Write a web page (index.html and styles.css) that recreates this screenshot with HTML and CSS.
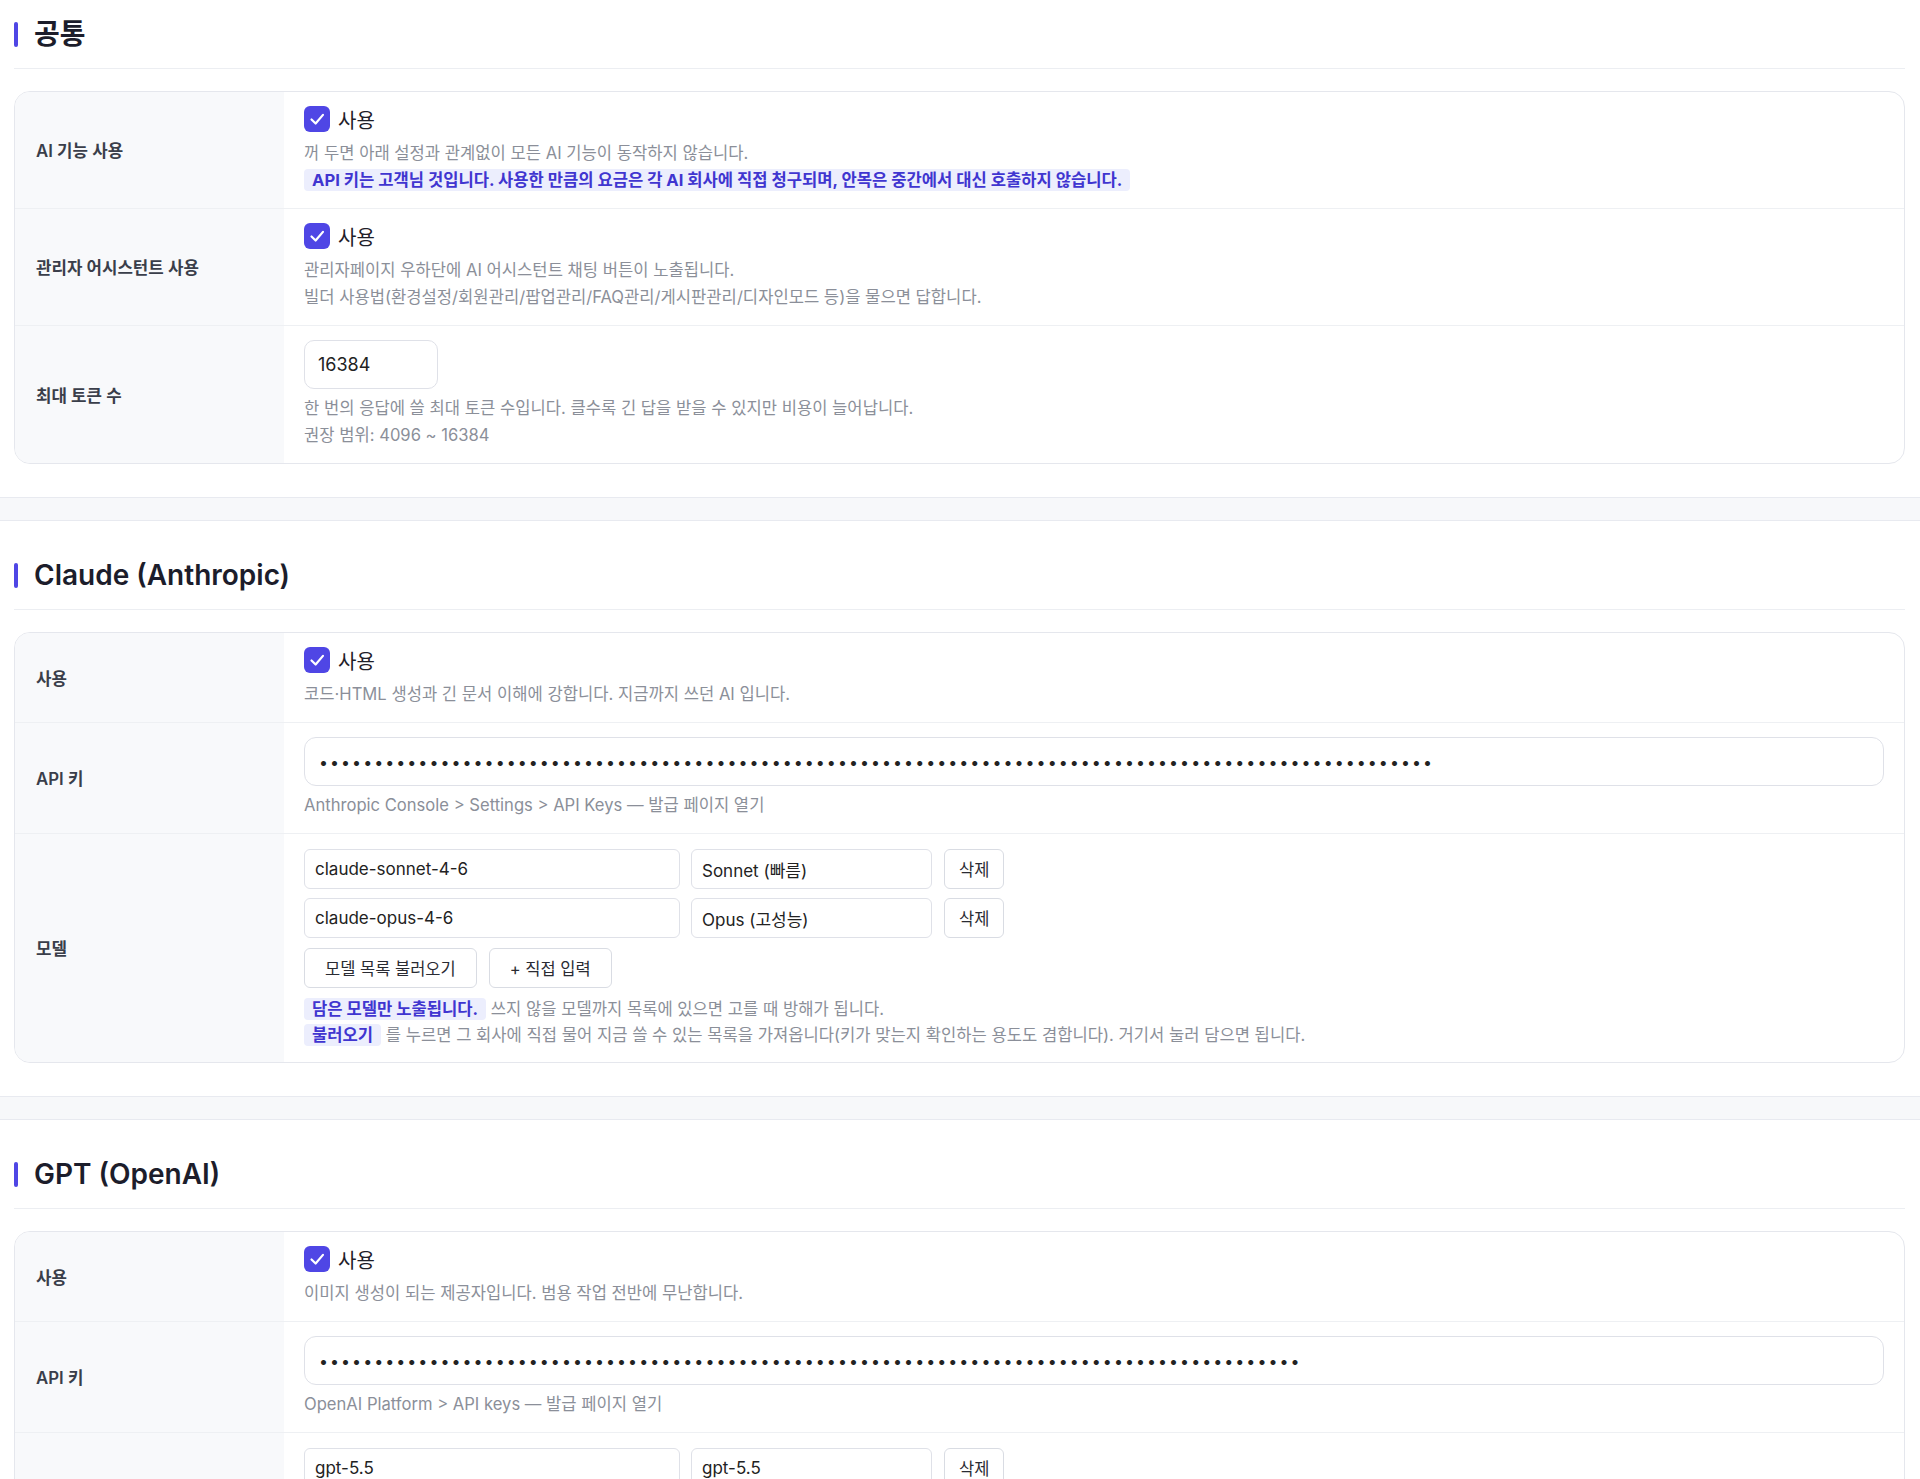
FILE: index.html
```html
<!DOCTYPE html>
<html lang="ko">
<head>
    <meta charset="UTF-8">
    <meta name="viewport" content="width=device-width, initial-scale=1.0">
    <title>AI 설정</title>
    <link rel="stylesheet" href="styles.css">
</head>
<body>
    <div class="settings">

        <!-- 공통 -->
        <section class="section">
            <h2 class="section-title">공통</h2>
            <div class="card">
                <div class="row">
                    <div class="row-label">AI 기능 사용</div>
                    <div class="row-body">
                        <label class="check">
                            <input type="checkbox" checked>
                            <span class="check-box"><svg viewBox="0 0 24 24"><polyline points="6,12.5 10.5,17 18.5,7.5"/></svg></span>
                            <span>사용</span>
                        </label>
                        <p class="desc">
                            꺼 두면 아래 설정과 관계없이 모든 AI 기능이 동작하지 않습니다.<br>
                            <span class="mark">API 키는 고객님 것입니다. 사용한 만큼의 요금은 각 AI 회사에 직접 청구되며, 안목은 중간에서 대신 호출하지 않습니다.</span>
                        </p>
                    </div>
                </div>
                <div class="row">
                    <div class="row-label">관리자 어시스턴트 사용</div>
                    <div class="row-body">
                        <label class="check">
                            <input type="checkbox" checked>
                            <span class="check-box"><svg viewBox="0 0 24 24"><polyline points="6,12.5 10.5,17 18.5,7.5"/></svg></span>
                            <span>사용</span>
                        </label>
                        <p class="desc">
                            관리자페이지 우하단에 AI 어시스턴트 채팅 버튼이 노출됩니다.<br>
                            빌더 사용법(환경설정/회원관리/팝업관리/FAQ관리/게시판관리/디자인모드 등)을 물으면 답합니다.
                        </p>
                    </div>
                </div>
                <div class="row">
                    <div class="row-label">최대 토큰 수</div>
                    <div class="row-body">
                        <input type="text" class="input input-token" value="16384">
                        <p class="desc desc-under">
                            한 번의 응답에 쓸 최대 토큰 수입니다. 클수록 긴 답을 받을 수 있지만 비용이 늘어납니다.<br>
                            권장 범위: 4096 ~ 16384
                        </p>
                    </div>
                </div>
            </div>
        </section>

        <!-- Claude -->
        <section class="section">
            <h2 class="section-title">Claude (Anthropic)</h2>
            <div class="card">
                <div class="row">
                    <div class="row-label">사용</div>
                    <div class="row-body">
                        <label class="check">
                            <input type="checkbox" checked>
                            <span class="check-box"><svg viewBox="0 0 24 24"><polyline points="6,12.5 10.5,17 18.5,7.5"/></svg></span>
                            <span>사용</span>
                        </label>
                        <p class="desc">코드·HTML 생성과 긴 문서 이해에 강합니다. 지금까지 쓰던 AI 입니다.</p>
                    </div>
                </div>
                <div class="row">
                    <div class="row-label">API 키</div>
                    <div class="row-body">
                        <input type="password" class="input input-key" value="sk-ant-api03-xxxxxxxxxxxxxxxxxxxxxxxxxxxxxxxxxxxxxxxxxxxxxxxxxxxxxxxxxxxxxxxxxxxxxxxxxxxxxxxxxxxxxxxx">
                        <p class="desc desc-under">Anthropic Console &gt; Settings &gt; API Keys — 발급 페이지 열기</p>
                    </div>
                </div>
                <div class="row">
                    <div class="row-label">모델</div>
                    <div class="row-body">
                        <div class="model-list">
                            <div class="model">
                                <input type="text" class="input model-id" value="claude-sonnet-4-6">
                                <input type="text" class="input model-name" value="Sonnet (빠름)">
                                <button class="btn btn-small">삭제</button>
                            </div>
                            <div class="model">
                                <input type="text" class="input model-id" value="claude-opus-4-6">
                                <input type="text" class="input model-name" value="Opus (고성능)">
                                <button class="btn btn-small">삭제</button>
                            </div>
                        </div>
                        <div class="model-actions">
                            <button class="btn">모델 목록 불러오기</button>
                            <button class="btn">+ 직접 입력</button>
                        </div>
                        <p class="desc desc-hint">
                            <span class="mark">담은 모델만 노출됩니다.</span> 쓰지 않을 모델까지 목록에 있으면 고를 때 방해가 됩니다.<br>
                            <span class="mark">불러오기</span> 를 누르면 그 회사에 직접 물어 지금 쓸 수 있는 목록을 가져옵니다(키가 맞는지 확인하는 용도도 겸합니다). 거기서 눌러 담으면 됩니다.
                        </p>
                    </div>
                </div>
            </div>
        </section>

        <!-- GPT -->
        <section class="section">
            <h2 class="section-title">GPT (OpenAI)</h2>
            <div class="card">
                <div class="row">
                    <div class="row-label">사용</div>
                    <div class="row-body">
                        <label class="check">
                            <input type="checkbox" checked>
                            <span class="check-box"><svg viewBox="0 0 24 24"><polyline points="6,12.5 10.5,17 18.5,7.5"/></svg></span>
                            <span>사용</span>
                        </label>
                        <p class="desc">이미지 생성이 되는 제공자입니다. 범용 작업 전반에 무난합니다.</p>
                    </div>
                </div>
                <div class="row">
                    <div class="row-label">API 키</div>
                    <div class="row-body">
                        <input type="password" class="input input-key" value="sk-proj-xxxxxxxxxxxxxxxxxxxxxxxxxxxxxxxxxxxxxxxxxxxxxxxxxxxxxxxxxxxxxxxxxxxxxxxxxxxxxxxxx">
                        <p class="desc desc-under">OpenAI Platform &gt; API keys — 발급 페이지 열기</p>
                    </div>
                </div>
                <div class="row">
                    <div class="row-label">모델</div>
                    <div class="row-body">
                        <div class="model-list">
                            <div class="model">
                                <input type="text" class="input model-id" value="gpt-5.5">
                                <input type="text" class="input model-name" value="gpt-5.5">
                                <button class="btn btn-small">삭제</button>
                            </div>
                        </div>
                        <div class="model-actions">
                            <button class="btn">모델 목록 불러오기</button>
                            <button class="btn">+ 직접 입력</button>
                        </div>
                    </div>
                </div>
            </div>
        </section>

    </div>
</body>
</html>
```

FILE: styles.css
```css
body {
    margin: 0;
    background: #f7f8fa;
    font-family: Inter, "Noto Sans CJK KR", sans-serif;
    font-size: 16px;
    color: #222;
}

/* page is shown scrolled a little */
.settings {
    margin-top: -21px;
    display: flex;
    flex-direction: column;
    gap: 22px;
}

.section {
    background: #fff;
    border-top: 1px solid #e8eaf0;
    border-bottom: 1px solid #e8eaf0;
    padding: 0 15px 33px 14px;
}

.section-title {
    display: flex;
    align-items: center;
    gap: 16px;
    margin: 0 0 22px;
    padding: 34px 0 14px;
    border-bottom: 1px solid #eceef2;
    font-size: 28px;
    line-height: 40px;
    font-weight: 600;
    color: #1c1d2b;
}
.section-title::before {
    content: "";
    width: 4px;
    height: 25px;
    border-radius: 2px;
    background: #4f46e5;
}

.card {
    border: 1px solid #e5e7ed;
    border-radius: 16px;
    overflow: hidden;
}

.row {
    display: grid;
    grid-template-columns: 269px 1fr;
    border-bottom: 1px solid #eef0f3;
}
.row:last-child {
    border-bottom: none;
}

.row-label {
    display: flex;
    align-items: center;
    padding-left: 21px;
    background: #f8f9fb;
    font-size: 16.8px;
    font-weight: 600;
    color: #3a3e4a;
}

.row-body {
    padding: 14px 20px;
}

.check {
    display: flex;
    align-items: center;
    gap: 8px;
    height: 26px;
    font-size: 20px;
    color: #1f2029;
    cursor: pointer;
}
.check input {
    display: none;
}
.check-box {
    width: 26px;
    height: 26px;
    border-radius: 6px;
    background: #4f46e5;
    display: flex;
    align-items: center;
    justify-content: center;
}
.check-box svg {
    width: 22px;
    height: 22px;
    fill: none;
    stroke: #fff;
    stroke-width: 2.4;
    stroke-linecap: round;
    stroke-linejoin: round;
}

.desc {
    margin: 8px 0 0;
    font-size: 16.6px;
    line-height: 27px;
    color: #8b8f99;
}
.desc-under {
    margin-top: 6px;
}
.desc-hint {
    margin-top: 8px;
    line-height: 26px;
}

.mark {
    background: #eceefd;
    color: #4035d0;
    font-weight: 700;
    padding: 1px 8px;
    border-radius: 4px;
}

.input {
    box-sizing: border-box;
    font-family: inherit;
    color: #222;
    background: #fff;
    border: 1px solid #dfe1e8;
    outline: none;
}
.input-token {
    display: block;
    width: 134px;
    height: 49px;
    padding: 0 13px;
    border-radius: 10px;
    font-size: 18px;
}
.input-key {
    display: block;
    width: 100%;
    height: 49px;
    padding: 0 14px;
    border-radius: 12px;
    font-size: 16px;
    letter-spacing: 2.04px;
}

.model-list {
    display: flex;
    flex-direction: column;
    gap: 9px;
    margin-top: 1px;
}
.model {
    display: flex;
    gap: 11px;
}
.model .btn-small {
    margin-left: 1px;
}
.model-id,
.model-name {
    height: 40px;
    padding: 0 10px;
    border-radius: 6px;
    font-size: 17px;
}
.model-id {
    width: 376px;
}
.model-name {
    width: 241px;
}

.model-actions {
    display: flex;
    gap: 12px;
    margin-top: 10px;
}

.btn {
    height: 40px;
    padding: 0 20px;
    background: #fff;
    border: 1px solid #d9dce3;
    border-radius: 6px;
    font-family: inherit;
    font-size: 16.5px;
    color: #2a2b33;
    cursor: pointer;
}
.btn-small {
    padding: 0 14px;
}
```
